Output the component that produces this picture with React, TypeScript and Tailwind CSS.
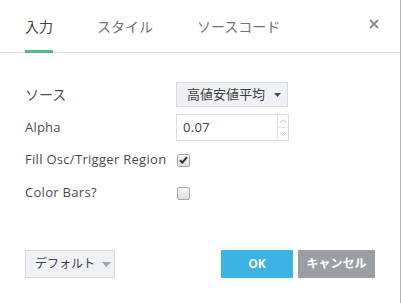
import React from 'react';

// --- ICONS ---
const CloseIcon = () => (
  <svg width="10" height="10" viewBox="0 0 10 10" className="text-[#8d9099]">
    <path d="M1 1L9 9M9 1L1 9" stroke="currentColor" strokeWidth="2" />
  </svg>
);

const CheckIcon = () => (
  <svg width="9" height="8" viewBox="0 0 9 8">
    <path d="M1 4.2L3.3 6.6L8 1.2" fill="none" stroke="#2f2f2f" strokeWidth="2" />
  </svg>
);

const Chevron = ({ up }: { up?: boolean }) => (
  <svg width="7" height="4" viewBox="0 0 7 4">
    <path d={up ? 'M0.5 3.5L3.5 0.8L6.5 3.5' : 'M0.5 0.5L3.5 3.2L6.5 0.5'} fill="none" stroke="#a7bfd3" strokeWidth="1" />
  </svg>
);

const Checkbox = ({ checked }: { checked?: boolean }) => (
  <div className="w-[13px] h-[13px] rounded-[2px] border border-[#a9a9a9] bg-gradient-to-b from-[#f7f7f7] to-[#dedede] flex items-center justify-center">
    {checked && <CheckIcon />}
  </div>
);

const tabs = ['入力', 'スタイル', 'ソースコード'];

export default function App() {
  return (
    <div className="w-[401px] h-[303px] bg-white border-r border-[#b3b3b3] flex flex-col font-['Open_Sans','Noto_Sans_CJK_JP',sans-serif] text-[13px] text-[#4a4a4a]">
      {/* タブ */}
      <div className="h-[53px] border-b border-[#dcdfe5] flex items-stretch pl-[25px] pr-[21px]">
        <div className="flex gap-[44px]">
          {tabs.map((t, i) => (
            <div key={t} className={`relative flex items-center text-[14px] ${i === 0 ? 'text-[#3e3e3e]' : 'text-[#6f727b]'}`}>
              {t}
              {i === 0 && <div className="absolute left-0 right-0 bottom-[-1px] h-[3px] bg-[#53b987]"></div>}
            </div>
          ))}
        </div>
        <div className="ml-auto flex items-center pb-[4px]">
          <CloseIcon />
        </div>
      </div>

      {/* フォーム */}
      <div className="pl-[25px] pt-[29px] flex flex-col">
        <div className="flex items-center h-[25px]">
          <div className="w-[151px] text-[14px]">ソース</div>
          <div className="w-[112px] h-[25px] bg-[#f0f1f4] border border-[#d9dce2] flex items-center justify-between pl-[10px] pr-[6px] text-[#3e3e3e]">
            <span>高値安値平均</span>
            <svg width="7" height="4" viewBox="0 0 7 4"><path d="M0 0H7L3.5 4Z" fill="#4a4a4a" /></svg>
          </div>
        </div>
        <div className="flex items-center h-[27px] mt-[7px]">
          <div className="w-[151px] tracking-[0.2px]">Alpha</div>
          <div className="w-[113px] h-[27px] border border-[#d9dce2] flex">
            <div className="flex-1 flex items-center pl-[6px] text-[#3e3e3e] tracking-[0.3px]">0.07</div>
            <div className="w-[11px] border-l border-[#dfe2e8] flex flex-col">
              <div className="flex-1 flex items-center justify-center border-b border-[#dfe2e8]"><Chevron up /></div>
              <div className="flex-1 flex items-center justify-center"><Chevron /></div>
            </div>
          </div>
        </div>
        <div className="flex items-center h-[26px] mt-[6px]">
          <div className="w-[152px] tracking-[0.3px] whitespace-nowrap">Fill Osc/Trigger Region</div>
          <Checkbox checked />
        </div>
        <div className="flex items-center h-[26px] mt-[7px]">
          <div className="w-[152px] tracking-[0.3px]">Color Bars?</div>
          <Checkbox />
        </div>
      </div>

      {/* フッター */}
      <div className="mt-auto pb-[25px] pl-[25px] pr-[25px] flex items-center">
        <div className="w-[90px] h-[28px] bg-[#f0f1f5] border border-[#d6d9df] flex items-center pl-[9px] gap-[7px] text-[12px] text-[#3e3e3e] whitespace-nowrap">
          <span>デフォルト</span>
          <svg width="9" height="5" viewBox="0 0 9 5"><path d="M0 0H9L4.5 5Z" fill="#a0a3a9" /></svg>
        </div>
        <div className="ml-auto flex gap-[5px]">
          <div className="w-[72px] h-[28px] bg-[#3bb3e4] text-white font-bold text-[12px] flex items-center justify-center">OK</div>
          <div className="w-[77px] h-[28px] bg-[#9c9ea6] text-white font-bold text-[12px] flex items-center justify-center whitespace-nowrap">キャンセル</div>
        </div>
      </div>
    </div>
  );
}
